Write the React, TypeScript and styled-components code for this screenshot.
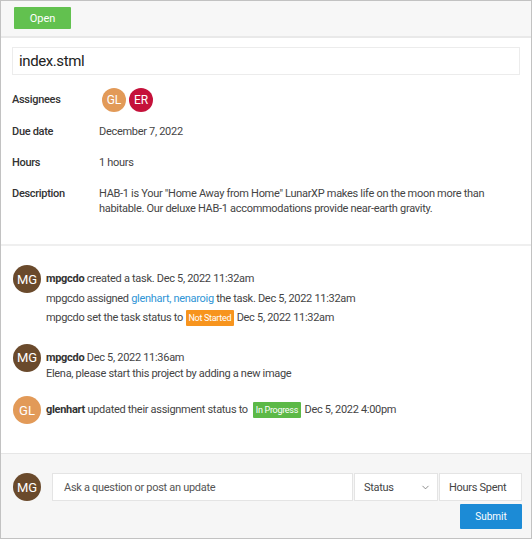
import React from "react";
import styled, { createGlobalStyle } from "styled-components";
import { ChevronDown } from "lucide-react";

const Global = createGlobalStyle`
  html, body { margin: 0; padding: 0; background: #fff; }
  body { font-family: Roboto, Inter, "Liberation Sans", sans-serif; }
  * { box-sizing: border-box; }
`;

const Frame = styled.div`
  width: 532px;
  height: 539px;
  border: 1px solid #c2c2c2;
  display: flex;
  flex-direction: column;
  background: #fff;
  color: #444;
  font-size: 11px;
  letter-spacing: -0.3px;
`;

const Header = styled.div`
  height: 37px;
  background: #f7f7f7;
  border-bottom: 2px solid #e9e9e9;
  padding: 6px 13px;
  display: flex;
  align-items: flex-start;
`;

const Button = styled.button<{ $tone: "green" | "blue" }>`
  border: none;
  border-radius: 1px;
  color: #fff;
  font-family: inherit;
  letter-spacing: 0;
  cursor: pointer;
  background: ${(p) => (p.$tone === "green" ? "#62c14f" : "#1c8bd6")};
  font-size: ${(p) => (p.$tone === "green" ? "11px" : "10px")};
  width: ${(p) => (p.$tone === "green" ? "57px" : "62px")};
  height: ${(p) => (p.$tone === "green" ? "22px" : "25px")};
  padding: 0;
`;

const Details = styled.div`
  padding: 9px 11px 20px;
  border-bottom: 2px solid #efefef;
`;

const TitleBox = styled.div`
  height: 28px;
  border: 1px solid #ececec;
  padding: 0 6px;
  display: flex;
  align-items: center;
  font-size: 15px;
  letter-spacing: -0.4px;
  color: #222;
  margin-bottom: 13px;
`;

const FieldGrid = styled.div`
  display: grid;
  grid-template-columns: 87px 1fr;
  padding-right: 2px;
`;

const Label = styled.div<{ $h?: number }>`
  font-weight: 500;
  color: #333;
  line-height: 16px;
  padding: 7px 0 8px;
  ${(p) => (p.$h ? `height: ${p.$h}px; padding: 0; display:flex; align-items:center; margin-bottom: 5px;` : "")}
`;

const Value = styled.div<{ $h?: number; $lh?: number }>`
  line-height: ${(p) => p.$lh ?? 16}px;
  padding: 7px 0 8px;
  color: #444;
  ${(p) => (p.$h ? `height: ${p.$h}px; padding: 0; display:flex; align-items:center; margin-bottom: 5px;` : "")}
`;

const AvatarRow = styled.div`
  display: flex;
  gap: 3px;
  padding-left: 3px;
`;

const Avatar = styled.div<{ $bg: string; $size: number }>`
  width: ${(p) => p.$size}px;
  height: ${(p) => p.$size}px;
  border-radius: 50%;
  background: ${(p) => p.$bg};
  color: #fff;
  letter-spacing: 0;
  font-size: ${(p) => (p.$size > 25 ? 13 : 12)}px;
  display: flex;
  align-items: center;
  justify-content: center;
  flex-shrink: 0;
`;

const Activity = styled.div`
  padding: 19px 12px 0;
  display: flex;
  flex-direction: column;
  gap: 16px;
`;

const Item = styled.div`
  display: flex;
  align-items: flex-start;
  gap: 5px;
`;

const ItemBody = styled.div`
  padding-top: 4px;
  display: flex;
  flex-direction: column;
`;

const Line = styled.div`
  line-height: 19.5px;
  display: flex;
  align-items: center;
  white-space: pre;
  color: #444;
`;

const Comment = styled.div`
  line-height: 13px;
  color: #444;
`;

const Name = styled.b`
  font-weight: 700;
  color: #333;
`;

const Link = styled.span`
  color: #2f95d6;
`;

const Badge = styled.span<{ $bg: string; $gap: number }>`
  background: ${(p) => p.$bg};
  color: #fff;
  font-size: 9px;
  line-height: 16px;
  height: 16px;
  padding: 0 2.5px;
  border-radius: 1px;
  margin: 0 ${(p) => p.$gap}px 0 3px;
`;

const Footer = styled.div`
  margin-top: auto;
  height: 85px;
  background: #f6f6f6;
  border-top: 1px solid #e6e6e6;
  padding: 19px 9px 0 12px;
  display: flex;
  flex-direction: column;
  align-items: flex-end;
  gap: 3px;
`;

const FormRow = styled.div`
  display: flex;
  align-items: center;
  width: 100%;
`;

const Inputs = styled.div`
  display: flex;
  flex: 1;
  margin-left: 11px;
  gap: 1px;
`;

const Field = styled.div<{ $w?: number; $pl: number }>`
  height: 28px;
  background: #fff;
  border: 1px solid #e4e4e4;
  display: flex;
  align-items: center;
  justify-content: space-between;
  padding: 0 6px 0 ${(p) => p.$pl}px;
  font-size: 11px;
  color: #444;
  ${(p) => (p.$w ? `width: ${p.$w}px;` : "flex: 1;")}
`;

const Placeholder = styled.span`
  color: #555;
`;

export default function App() {
  return (
    <>
      <Global />
      <Frame>
        <Header>
          <Button $tone="green">Open</Button>
        </Header>
        <Details>
          <TitleBox>index.stml</TitleBox>
          <FieldGrid>
            <Label $h={24}>Assignees</Label>
            <Value $h={24}>
              <AvatarRow>
                <Avatar $bg="#e29a58" $size={24}>GL</Avatar>
                <Avatar $bg="#c5113a" $size={24}>ER</Avatar>
              </AvatarRow>
            </Value>
            <Label>Due date</Label>
            <Value>December 7, 2022</Value>
            <Label>Hours</Label>
            <Value>1 hours</Value>
            <Label>Description</Label>
            <Value $lh={15}>
              HAB-1 is Your "Home Away from Home" LunarXP makes life on the moon more than habitable. Our deluxe HAB-1 accommodations provide near-earth gravity.
            </Value>
          </FieldGrid>
        </Details>
        <Activity>
          <Item>
            <Avatar $bg="#6a4a2c" $size={28}>MG</Avatar>
            <ItemBody>
              <Line>
                <Name>mpgcdo</Name> created a task. Dec 5, 2022 11:32am
              </Line>
              <Line>
                mpgcdo assigned <Link>glenhart, nenaroig</Link> the task. Dec 5, 2022 11:32am
              </Line>
              <Line>
                mpgcdo set the task status to<Badge $bg="#f7941d" $gap={3}>Not Started</Badge>Dec 5, 2022 11:32am
              </Line>
            </ItemBody>
          </Item>
          <Item>
            <Avatar $bg="#6a4a2c" $size={28}>MG</Avatar>
            <ItemBody>
              <Line>
                <Name>mpgcdo</Name> Dec 5, 2022 11:36am
              </Line>
              <Comment>Elena, please start this project by adding a new image</Comment>
            </ItemBody>
          </Item>
          <Item>
            <Avatar $bg="#e29a58" $size={28}>GL</Avatar>
            <ItemBody>
              <Line>
                <Name>glenhart</Name> updated their assignment status to <Badge $bg="#5cb947" $gap={4}>In Progress</Badge>Dec 5, 2022 4:00pm
              </Line>
            </ItemBody>
          </Item>
        </Activity>
        <Footer>
          <FormRow>
            <Avatar $bg="#6a4a2c" $size={28}>MG</Avatar>
            <Inputs>
              <Field $pl={11}>
                <Placeholder>Ask a question or post an update</Placeholder>
              </Field>
              <Field $w={84} $pl={9}>
                <span>Status</span>
                <ChevronDown size={11} color="#666" strokeWidth={1.6} />
              </Field>
              <Field $w={83} $pl={9}>
                <span>Hours Spent</span>
              </Field>
            </Inputs>
          </FormRow>
          <Button $tone="blue">Submit</Button>
        </Footer>
      </Frame>
    </>
  );
}
